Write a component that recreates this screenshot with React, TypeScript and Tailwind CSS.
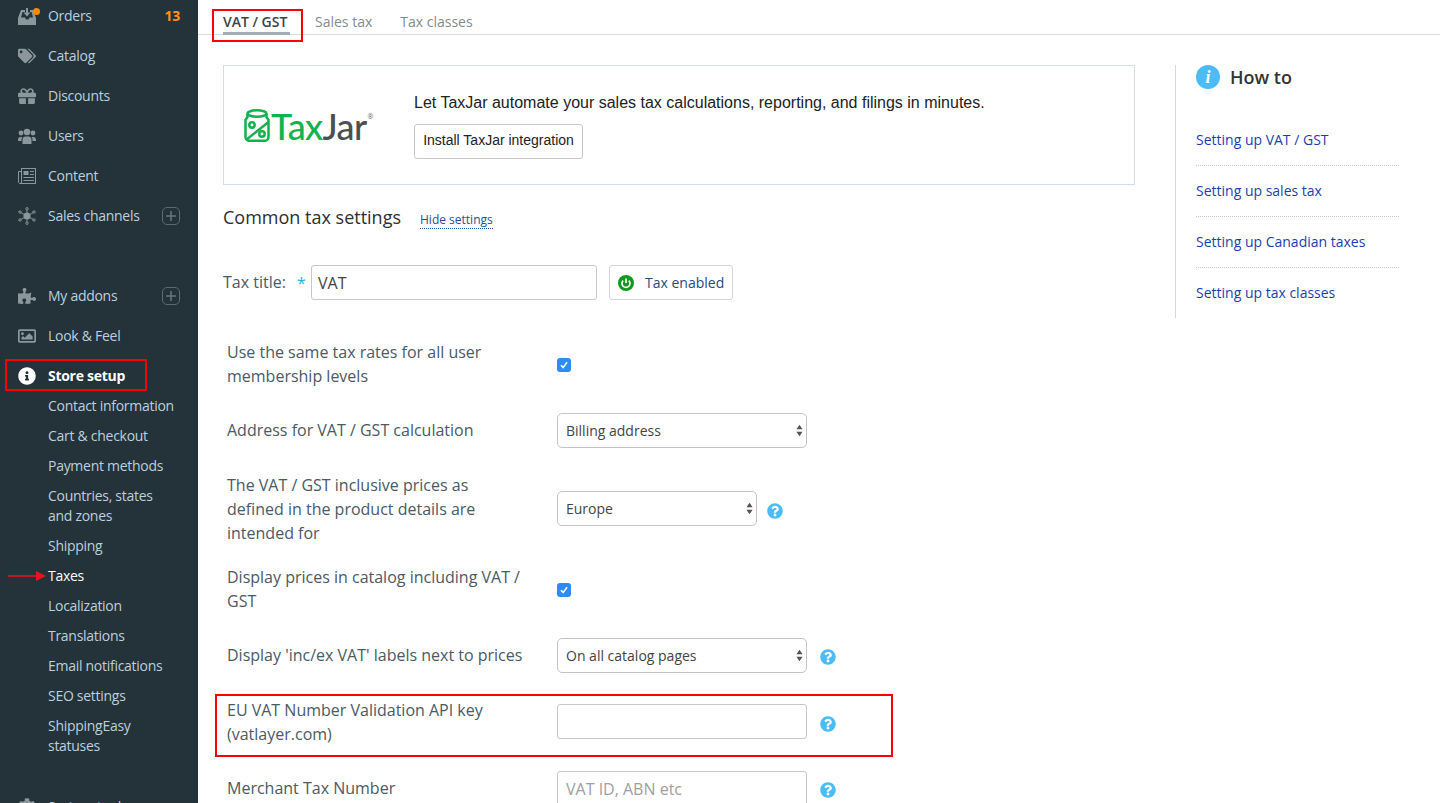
import { ReactNode } from "react";
import {
  FaCog,
  FaGift,
  FaInfoCircle,
  FaPuzzlePiece,
  FaQuestionCircle,
  FaRegImage,
  FaTags,
} from "react-icons/fa";

// sidebar icons that the packages don't have
function OrdersIcon() {
  return (
    <svg width="18" height="17" viewBox="0 0 18 17" fill="currentColor">
      <path d="M3 2h4v2H4.600L3 9.500h4l1 2h2.500l1-2H15L13.600 4H12V2h3l3 8v7H0v-7z" />
      <path d="M8 0h2v4.500h2.500L9 8.500l-3.500-4H8z" />
    </svg>
  );
}

function UsersIcon() {
  return (
    <svg width="18" height="16" viewBox="0 0 18 16" fill="currentColor">
      <circle cx="9" cy="4" r="3.300" />
      <circle cx="3" cy="5" r="2.400" />
      <circle cx="15" cy="5" r="2.400" />
      <path d="M4.500 16v-4.500c0-2 1.500-3 3-3h3c1.500 0 3 1 3 3V16z" />
      <path d="M0 12c0-2 1-3 2.500-3H4.400c-.6.7-.9 1.500-.9 2.500V13H0zM18 12c0-2-1-3-2.500-3h-1.900c.6.7.9 1.500.9 2.500V13H18z" />
    </svg>
  );
}

function ChannelsIcon() {
  return (
    <svg width="18" height="18" viewBox="0 0 18 18" fill="currentColor" stroke="currentColor">
      <circle cx="9" cy="9" r="3.600" stroke="none" />
      <path d="M9 2.500v13M2.500 5.500l13 7M15.500 5.500l-13 7" strokeWidth="0.9" />
      <circle cx="9" cy="1.800" r="1.200" fill="#24323a" />
      <circle cx="9" cy="16.200" r="1.200" fill="#24323a" />
      <circle cx="2" cy="5" r="1.200" fill="#24323a" />
      <circle cx="16" cy="5" r="1.200" fill="#24323a" />
      <circle cx="2" cy="13" r="1.200" fill="#24323a" />
      <circle cx="16" cy="13" r="1.200" fill="#24323a" />
    </svg>
  );
}

function NewsIcon() {
  return (
    <svg width="18" height="16" viewBox="0 0 18 16" fill="none" stroke="currentColor">
      <rect x="3.500" y="0.500" width="14" height="15" />
      <path d="M3.500 3.500h-3V14c0 1 .7 1.500 1.500 1.500h1.500" />
      <rect x="5.500" y="3" width="5" height="4" fill="currentColor" stroke="none" />
      <path d="M12 3.500h4M12 6.500h4M5.500 9.500H16M5.500 12.500H16" />
    </svg>
  );
}

function PlusBox() {
  return (
    <span className="flex h-[18px] w-[18px] items-center justify-center rounded-[5px] border border-[#5d6a71] text-[#67747b]">
      <svg width="10" height="10" viewBox="0 0 10 10" stroke="currentColor" strokeWidth="1.600">
        <path d="M5 0v10M0 5h10" />
      </svg>
    </span>
  );
}

function NavItem(props: { icon: ReactNode; label: string; active?: boolean; right?: ReactNode }) {
  return (
    <div className="flex h-10 items-center pl-[18px] pr-[18px]">
      <span className={`flex w-[30px] shrink-0 ${props.active ? "text-white" : "text-[#8b979d]"}`}>
        {props.icon}
      </span>
      <span className={props.active ? "font-bold text-white" : "text-[#bcd0dd]"}>{props.label}</span>
      <span className="ml-auto">{props.right}</span>
    </div>
  );
}

const subItems = [
  "Contact information",
  "Cart & checkout",
  "Payment methods",
  "Countries, states and zones",
  "Shipping",
  "Taxes",
  "Localization",
  "Translations",
  "Email notifications",
  "SEO settings",
  "ShippingEasy statuses",
];

function Sidebar() {
  return (
    <aside className="relative h-full w-[198px] shrink-0 bg-[#24323a] text-sm leading-5 tracking-[-0.28px]">
      <div className="-mt-1">
        <NavItem
          icon={
            <span className="relative">
              <OrdersIcon />
              <span className="absolute -right-[3.5px] top-0 h-[7px] w-[7px] rounded-full bg-[#ff8a00]" />
            </span>
          }
          label="Orders"
          right={<span className="font-bold text-[#ff8f1f]">13</span>}
        />
        <NavItem icon={<FaTags size={18} />} label="Catalog" />
        <NavItem icon={<FaGift size={18} />} label="Discounts" />
        <NavItem icon={<UsersIcon />} label="Users" />
        <NavItem icon={<NewsIcon />} label="Content" />
        <NavItem icon={<ChannelsIcon />} label="Sales channels" right={<PlusBox />} />
        <div className="mt-10">
          <NavItem icon={<FaPuzzlePiece size={18} />} label="My addons" right={<PlusBox />} />
          <NavItem icon={<FaRegImage size={18} />} label="Look & Feel" />
          <NavItem icon={<FaInfoCircle size={18} />} label="Store setup" active />
        </div>
        <ul className="-mt-[5px] pl-12 pr-6">
          {subItems.map((s) => (
            <li key={s} className={`py-[5px] ${s === "Taxes" ? "font-medium text-white" : "text-[#bcd0dd]"}`}>
              {s}
            </li>
          ))}
        </ul>
        <div className="mt-[26px]">
          <NavItem icon={<FaCog size={18} />} label="System tools" />
        </div>
      </div>

      {/* annotations */}
      <div className="absolute left-[5px] top-[359px] h-[32px] w-[142px] border-2 border-[#ff0000]" />
      <svg className="absolute left-[8px] top-[571px]" width="38" height="10" viewBox="0 0 38 10" fill="#e8141c">
        <path d="M0 4.200h28V0l10 5-10 5V5.800H0z" />
      </svg>
    </aside>
  );
}

function JarLogo() {
  return (
    <div className="flex items-center">
      <svg width="26" height="33" viewBox="0 0 26 33" fill="none" stroke="#12b24f" strokeWidth="2.500">
        <ellipse cx="13" cy="4.500" rx="9.500" ry="3.200" />
        <path d="M3.500 5v3L1.500 11v17c0 2 1.500 3.800 4 3.800h15c2.500 0 4-1.800 4-3.800V11l-2-3V5" />
        <path d="M2 31L24.500 13" />
        <circle cx="8" cy="16" r="2.700" />
        <circle cx="18" cy="25" r="2.700" />
      </svg>
      <span className="mt-[2px] ml-[1px] font-['Lato',sans-serif] text-[36px] font-medium leading-none tracking-[-0.6px] text-[#12b24f]">
        Tax
      </span>
      <span className="mt-[2px] font-['Lato',sans-serif] text-[36px] font-medium leading-none tracking-[-0.6px] text-[#4b4f54]">
        Jar
      </span>
      <span className="-mt-4 ml-[1px] text-[7px] text-[#666]">®</span>
    </div>
  );
}

function HelpIcon() {
  return <FaQuestionCircle size={16} className="text-[#4cbcf7]" />;
}

function Select(props: { value: string; width: string; className?: string }) {
  return (
    <div className={`relative ${props.width} ${props.className ?? ""}`}>
      <select
        defaultValue={props.value}
        className="h-[35px] w-full appearance-none rounded-[5px] border border-[#c4c4c4] bg-white pl-2 text-sm text-[#444] font-['Open_Sans',sans-serif]"
      >
        <option>{props.value}</option>
      </select>
      <svg className="pointer-events-none absolute right-[4px] top-[11px]" width="7" height="13" viewBox="0 0 8 13" fill="#555">
        <path d="M4 0l3.500 5h-7zM4 13L.5 8h7z" />
      </svg>
    </div>
  );
}

function Checkbox() {
  return (
    <span className="mt-[2px] flex h-[14px] w-[14px] items-center justify-center rounded-[3px] bg-[#2e8cf6]">
      <svg width="10" height="10" viewBox="0 0 10 10" fill="none" stroke="#fff" strokeWidth="1.600">
        <path d="M2 5.200l2.200 2.400L8 2.200" />
      </svg>
    </span>
  );
}

function Row(props: { label: ReactNode; children: ReactNode; className?: string; single?: boolean }) {
  return (
    <div className={`flex items-center ${props.className ?? ""}`}>
      <div className={`w-[334px] shrink-0 pl-1 pr-[34px] text-base leading-6 text-[#4a5a66] ${props.single ? "pb-[2px]" : ""}`}>
        {props.label}
      </div>
      {props.children}
    </div>
  );
}

const howTo = ["Setting up VAT / GST", "Setting up sales tax", "Setting up Canadian taxes", "Setting up tax classes"];

export default function App() {
  return (
    <div className="flex h-[803px] w-[1440px] overflow-hidden bg-white font-['Open_Sans',sans-serif]">
      <Sidebar />

      <main className="relative min-w-0 flex-1">
        {/* tabs */}
        <div className="flex h-[35px] border-b border-[#d9dcde] pl-[25px] pt-[12px] text-sm leading-5">
          <div className="h-[23px] w-[67px] border-b-[3px] border-[#a3aeb5] font-semibold text-[#39444c]">VAT / GST</div>
          <div className="ml-[25px] font-medium text-[#7f8b93]">Sales tax</div>
          <div className="ml-[28px] font-medium text-[#7f8b93]">Tax classes</div>
        </div>
        <div className="absolute left-[14px] top-[9px] h-[33px] w-[91px] border-2 border-[#ff0000]" />

        <div className="flex pl-[25px] pt-[30px]">
          <div className="w-[912px] shrink-0">
            {/* banner */}
            <section className="flex h-[120px] border border-[#cfe0ea] pl-5">
              <div className="w-[170px] shrink-0 self-center">
                <JarLogo />
              </div>
              <div className="pt-[26px] font-['Liberation_Sans',sans-serif] text-[#222]">
                <p className="text-base leading-[22px]">
                  Let TaxJar automate your sales tax calculations, reporting, and filings in minutes.
                </p>
                <button className="mt-[10px] h-[35px] w-[169px] rounded-[3px] border border-[#c8c8c8] bg-white pb-[3px] text-sm">
                  Install TaxJar integration
                </button>
              </div>
            </section>

            <div className="mt-[19px] flex items-baseline">
              <h2 className="text-lg leading-[27px] text-[#2b2f33]">Common tax settings</h2>
              <span className="ml-[19px] border-b border-dotted border-[#1e5aa8] text-xs leading-4 text-[#20518f]">
                Hide settings
              </span>
            </div>

            <div className="mt-[34px] flex items-center text-base text-[#4a5a66]">
              <span className="w-[74px] pb-[2px]">Tax title:</span>
              <span className="w-[14px] text-[#1fb6d9]">*</span>
              <input
                defaultValue="VAT"
                className="h-[35px] w-[286px] rounded-[3px] border border-[#c8c8c8] px-[6px] text-base text-[#444]"
              />
              <button className="ml-3 flex h-[35px] w-[124px] items-center rounded-[3px] border border-[#d5d5d5] pl-2 text-sm text-[#27497e]">
                <svg width="16" height="16" viewBox="0 0 16 16" className="mr-[11px]">
                  <circle cx="8" cy="8" r="8" fill="#0f9a1f" />
                  <path d="M5.200 5.600a4 4 0 1 0 5.600 0" fill="none" stroke="#fff" strokeWidth="1.700" />
                  <path d="M8 3.500v4.500" stroke="#fff" strokeWidth="1.700" />
                </svg>
                Tax enabled
              </button>
            </div>

            {/* form rows */}
            <div className="mt-[40px]">
              <Row label="Use the same tax rates for all user membership levels">
                <Checkbox />
              </Row>
              <Row single className="mt-[25px]" label="Address for VAT / GST calculation">
                <Select value="Billing address" width="w-[250px]" />
              </Row>
              <Row className="mt-[25px]" label="The VAT / GST inclusive prices as defined in the product details are intended for">
                <Select value="Europe" width="w-[200px]" className="mb-px" />
                <span className="ml-[10px] mt-[4px]">
                  <HelpIcon />
                </span>
              </Row>
              <Row className="mt-[20px]" label="Display prices in catalog including VAT / GST">
                <Checkbox />
              </Row>
              <Row single className="mt-[25px]" label="Display 'inc/ex VAT' labels next to prices">
                <Select value="On all catalog pages" width="w-[250px]" />
                <span className="ml-[13px] mt-[2px]">
                  <HelpIcon />
                </span>
              </Row>
              <Row className="relative mt-[25px]" label="EU VAT Number Validation API key (vatlayer.com)">
                <input className="mb-px h-[35px] w-[250px] rounded-[3px] border border-[#c8c8c8]" />
                <span className="ml-[13px] mt-[4px]">
                  <HelpIcon />
                </span>
                <div className="absolute -left-2 -top-1 h-[63px] w-[678px] border-2 border-[#ff0000]" />
              </Row>
              <Row single className="mt-[25px]" label="Merchant Tax Number">
                <input
                  placeholder="VAT ID, ABN etc"
                  className="h-[35px] w-[250px] rounded-[3px] border border-[#c8c8c8] px-2 text-base placeholder:text-[#a0a0a0]"
                />
                <span className="ml-[13px] mt-[2px]">
                  <HelpIcon />
                </span>
              </Row>
            </div>
          </div>

          {/* how to */}
          <aside className="ml-10 h-[253px] w-[224px] border-l border-[#d8d8d8] pl-5">
            <div className="flex items-center">
              <span className="flex h-6 w-6 items-center justify-center rounded-full bg-[#4cbcf7] font-['Liberation_Serif',serif] text-lg font-bold italic leading-none text-white">
                i
              </span>
              <h3 className="ml-[10px] text-lg font-semibold leading-6 text-[#333]">How to</h3>
            </div>
            <ul className="mt-[41px] text-sm leading-5 text-[#1b3fae]">
              {howTo.map((h, i) => (
                <li key={h} className={i < howTo.length - 1 ? "mb-[15px] border-b border-dotted border-[#c9c9c9] pb-[15px]" : ""}>
                  {h}
                </li>
              ))}
            </ul>
          </aside>
        </div>
      </main>
    </div>
  );
}
